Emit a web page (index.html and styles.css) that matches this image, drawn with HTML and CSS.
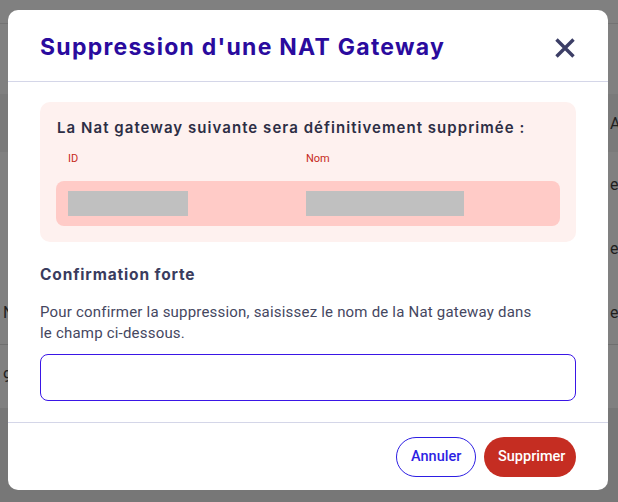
FILE: index.html
```html
<!DOCTYPE html>
<html lang="fr">
<head>
<meta charset="utf-8">
<title>Suppression d'une NAT Gateway</title>
<link rel="stylesheet" href="styles.css">
</head>
<body>
<div class="page">
  <div class="topbar"></div>
  <div class="gap1"></div>
  <div class="row head"><span class="l"></span><span class="r">A</span></div>
  <div class="row"><span class="l"></span><span class="r">e</span></div>
  <div class="row"><span class="l"></span><span class="r">e</span></div>
  <div class="row"><span class="l">N</span><span class="r">e</span></div>
  <div class="row last"><span class="l">9</span><span class="r"></span></div>
  <div class="bottom"></div>
</div>

<div class="modal" role="dialog" aria-labelledby="mtitle">
  <header class="modal-header">
    <h1 id="mtitle" class="modal-title">Suppression d'une NAT Gateway</h1>
    <button class="close" aria-label="Fermer">
      <svg width="22" height="22" viewBox="0 0 22 22"><path d="M2.5 2.5 L19.5 19.5 M19.5 2.5 L2.5 19.5" stroke="#3c3e66" stroke-width="3.4" stroke-linecap="butt" fill="none"/></svg>
    </button>
  </header>
  <div class="modal-body">
    <section class="danger">
      <h2 class="danger-title">La Nat gateway suivante sera définitivement supprimée :</h2>
      <div class="cols labels">
        <span>ID</span>
        <span>Nom</span>
      </div>
      <div class="cols values">
        <span class="mask mask-id"></span>
        <span class="mask mask-name"></span>
      </div>
    </section>
    <h3 class="confirm-title">Confirmation forte</h3>
    <p class="confirm-text">Pour confirmer la suppression, saisissez le nom de la Nat gateway dans le champ ci-dessous.</p>
    <input class="confirm-input" type="text" aria-label="Nom de la Nat gateway">
  </div>
  <footer class="modal-footer">
    <button class="btn btn-outline">Annuler</button>
    <button class="btn btn-danger">Supprimer</button>
  </footer>
</div>
</body>
</html>
```
FILE: styles.css
```css
* { box-sizing: border-box; }
html, body { margin: 0; padding: 0; }
body {
  width: 618px;
  height: 502px;
  overflow: hidden;
  background: #808080;
  font-family: Roboto, "Liberation Sans", sans-serif;
  position: relative;
}

/* underlying page, dimmed */
.page { display: flex; flex-direction: column; height: 502px; }
.topbar { height: 24px; border-bottom: 1px solid #737373; background: #808080; }
.gap1 { height: 70px; }
.row {
  height: 64px;
  display: flex;
  justify-content: space-between;
  align-items: center;
  color: #1f1f1f;
  font-size: 16px;
  background: #808080;
}
.row.head { height: 58px; background: #7a7a7a; }
.row .l { width: 10px; overflow: hidden; text-indent: 3px; }
.row .r { width: 8px; overflow: hidden; }
.row.last { border-top: 1px solid #6f6f6f; }
.bottom { flex: 1; background: #777777; }

/* modal */
.modal {
  position: absolute;
  left: 8px;
  top: 10px;
  width: 600px;
  height: 480px;
  background: #fff;
  border-radius: 10px;
  display: flex;
  flex-direction: column;
}
.modal-header {
  height: 72px;
  border-bottom: 1px solid #d4d6e8;
  display: flex;
  align-items: center;
  justify-content: space-between;
  padding: 0 32px;
}
.modal-title {
  margin: 0;
  font-family: Inter, sans-serif;
  font-weight: 700;
  font-size: 23px;
  letter-spacing: 1.25px;
  color: #2a0b9e;
  padding-top: 2px;
}
.close {
  border: 0;
  background: none;
  padding: 0;
  width: 22px;
  height: 22px;
  display: flex;
  margin-top: 4px;
}
.modal-body { padding: 20px 32px 0; flex: 1; }
.danger {
  background: #fef1ef;
  border-radius: 10px;
  padding: 16px 16px 16px;
  height: 140px;
}
.danger-title {
  margin: 0;
  font-family: Inter, sans-serif;
  font-weight: 600;
  font-size: 15px;
  letter-spacing: 1.05px;
  color: #2d2e45;
  padding-left: 1px;
}
.cols { display: grid; grid-template-columns: 238px 1fr; }
.labels {
  padding: 15px 12px 0;
  font-size: 11px;
  color: #c62a20;
  height: 44px;
}
.values {
  background: #ffcbc7;
  border-radius: 8px;
  height: 45px;
  padding: 10px 12px;
  align-items: center;
}
.mask { display: block; height: 25px; background: #c0c0c0; }
.mask-id { width: 120px; }
.mask-name { width: 158px; }

.confirm-title {
  margin: 23px 0 0;
  font-family: Inter, sans-serif;
  font-weight: 700;
  font-size: 15.5px;
  letter-spacing: 0.85px;
  color: #3a3c5e;
}
.confirm-text {
  margin: 18px 0 0;
  font-size: 15px;
  letter-spacing: 0.2px;
  line-height: 21px;
  color: #45475f;
  width: 500px;
}
.confirm-input {
  display: block;
  margin-top: 10px;
  width: 536px;
  height: 47px;
  border: 1px solid #3a16e6;
  border-radius: 8px;
  outline: none;
}
.modal-footer {
  height: 68px;
  border-top: 1px solid #d4d6e8;
  display: flex;
  justify-content: flex-end;
  align-items: center;
  gap: 8px;
  padding: 0 32px 0;
}
.btn {
  height: 40px;
  border-radius: 20px;
  font-family: Roboto, sans-serif;
  font-size: 14.5px;
  font-weight: 500;
  padding: 0 14px;
  cursor: pointer;
}
.btn-outline { border: 1px solid #2d1ee3; background: #fff; color: #2d1ee3; width: 80px; }
.btn-danger { border: 0; background: #c52d22; color: #fff; width: 92px; }
```
